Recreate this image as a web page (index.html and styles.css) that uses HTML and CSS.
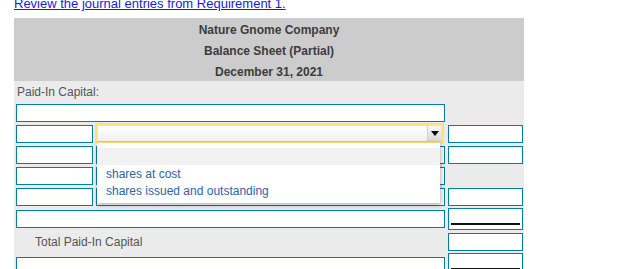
FILE: index.html
```html
<!DOCTYPE html>
<html lang="en">
<head>
    <meta charset="UTF-8">
    <meta name="viewport" content="width=device-width, initial-scale=1.0">
    <title>Balance Sheet (Partial)</title>
    <link rel="stylesheet" href="styles.css">
</head>
<body>
    <p class="review"><a href="#">Review the journal entries from Requirement 1.</a></p>

    <table class="sheet">
        <colgroup>
            <col class="c-small">
            <col class="c-wide">
            <col class="c-amount">
        </colgroup>
        <thead>
            <tr><th colspan="3">Nature Gnome Company</th></tr>
            <tr><th colspan="3">Balance Sheet (Partial)</th></tr>
            <tr><th colspan="3">December 31, 2021</th></tr>
        </thead>
        <tbody>
            <tr><td colspan="3" class="label">Paid-In Capital:</td></tr>
            <tr>
                <td colspan="2"><div class="field"></div></td>
                <td></td>
            </tr>
            <tr>
                <td><div class="field"></div></td>
                <td class="pick">
                    <div class="select"><span class="arrow"></span></div>
                    <ul class="options">
                        <li class="hover"></li>
                        <li>shares at cost</li>
                        <li>shares issued and outstanding</li>
                    </ul>
                </td>
                <td><div class="field"></div></td>
            </tr>
            <tr>
                <td><div class="field"></div></td>
                <td><div class="field"></div></td>
                <td><div class="field"></div></td>
            </tr>
            <tr>
                <td><div class="field"></div></td>
                <td><div class="field"></div></td>
                <td></td>
            </tr>
            <tr>
                <td><div class="field"></div></td>
                <td><div class="field"></div></td>
                <td><div class="field"></div></td>
            </tr>
            <tr class="sum-row">
                <td colspan="2"><div class="field"></div></td>
                <td><div class="field sum"></div></td>
            </tr>
            <tr>
                <td colspan="2" class="label total">Total Paid-In Capital</td>
                <td><div class="field"></div></td>
            </tr>
            <tr class="sum-row">
                <td colspan="2"><div class="field"></div></td>
                <td><div class="field sum grand"></div></td>
            </tr>
        </tbody>
    </table>
</body>
</html>
```

FILE: styles.css
```css
body {
    margin: 0;
    padding: 0 14px;
    font-family: "Liberation Sans", Arial, sans-serif;
    font-size: 12px;
    color: #555555;
    background-color: #ffffff;
}
.review {
    margin: -4px 0 7px;
    font-size: 13px;
    line-height: 15px;
}
.review a {
    color: #1a1ae0;
}
.sheet {
    width: 510px;
    border-collapse: collapse;
    table-layout: fixed;
}
.c-small {
    width: 80px;
}
.c-wide {
    width: 352px;
}
.c-amount {
    width: 78px;
}
.sheet th {
    background-color: #cccccc;
    color: #3c3c3c;
    font-weight: bold;
    text-align: center;
    padding: 3px 0 0;
    line-height: 18px;
}
.sheet td {
    background-color: #ebebeb;
    padding: 2px 1px 1px 2px;
    vertical-align: middle;
}
.sheet td.label {
    padding: 2px 0 0 3px;
    line-height: 19px;
}
.sheet td.total {
    padding-left: 21px;
}
.sheet .sum-row td {
    padding-top: 1px;
}
.field {
    box-sizing: border-box;
    height: 18px;
    border: 1px solid #00809e;
    background-color: #ffffff;
}
.field.sum {
    height: 22px;
    padding: 14px 2px 0;
}
.field.sum::after {
    content: "";
    display: block;
    border-top: 2px solid #111111;
}
.field.grand {
    height: 26px;
}
.field.grand::after {
    height: 1px;
    border-bottom: 2px solid #111111;
}

/* open dropdown */
.sheet td.pick {
    position: relative;
    vertical-align: top;
}
.select {
    box-sizing: border-box;
    display: flex;
    justify-content: flex-end;
    width: 345px;
    height: 17px;
    margin-left: 1px;
    border: 1px solid #e2e2e2;
    border-bottom-color: #c9c9c9;
    outline: 2px solid #fde27a;
    background: linear-gradient(#ffffff, #f0f0f0);
}
.arrow {
    display: flex;
    align-items: center;
    justify-content: center;
    width: 13px;
    border-left: 1px solid #cfcfcf;
    background: linear-gradient(#f7f7f7, #d9d9d9);
}
.arrow::before {
    content: "";
    border-left: 4px solid transparent;
    border-right: 4px solid transparent;
    border-top: 5px solid #000000;
}
.options {
    position: absolute;
    top: 20px;
    left: 3px;
    z-index: 2;
    width: 343px;
    margin: 0;
    padding: 5px 0 4px;
    list-style: none;
    background-color: #ffffff;
    box-shadow: 1px 2px 5px rgba(0, 0, 0, 0.3);
}
.options li {
    height: 17px;
    line-height: 19px;
    padding-left: 9px;
    color: #2d63a8;
}
.options li.hover {
    background-color: #f2f2f2;
}
```
